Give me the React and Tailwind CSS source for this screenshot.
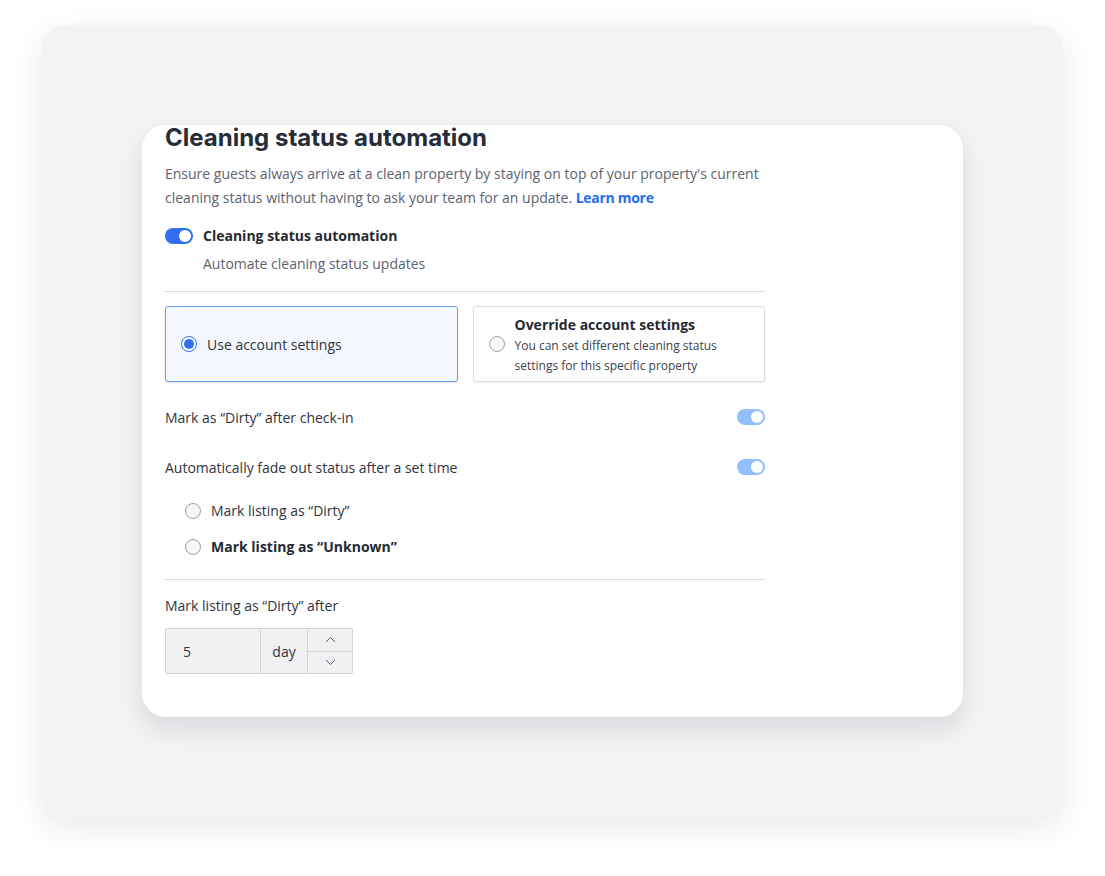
import React from "react";

const body = { fontFamily: '"Open Sans", "Noto Sans", sans-serif' };

function Toggle({ light }) {
  return (
    <div
      className={`relative h-4 w-7 shrink-0 rounded-full ${light ? "bg-[#93c0fb]" : "bg-[#2f6ff0]"}`}
    >
      <div className="absolute right-[2px] top-[2px] h-3 w-3 rounded-full bg-white" />
    </div>
  );
}

function Radio({ checked }) {
  return checked ? (
    <div className="flex h-4 w-4 shrink-0 items-center justify-center rounded-full border border-[#2f6ff0] bg-white">
      <div className="h-[10px] w-[10px] rounded-full bg-[#2f6ff0]" />
    </div>
  ) : (
    <div className="h-4 w-4 shrink-0 rounded-full border border-[#9a9ea8] bg-[#f7f7f9]" />
  );
}

export default function App() {
  return (
    <div className="h-[876px] w-[1105px] bg-white pl-[42px] pt-[25px]" style={body}>
      <div className="h-[792px] w-[1021px] rounded-[24px] bg-[#f3f3f4] pl-[100px] pt-[100px] shadow-[0_10px_30px_rgba(40,40,70,0.10)]">
        <div className="h-[592px] w-[821px] overflow-hidden rounded-[24px] bg-white pl-[23px] shadow-[0_12px_24px_rgba(40,45,80,0.12)]">
          <div className="w-[600px]">
            <h1
              className="mt-[-3px] text-[24px] font-bold leading-[32px] text-[#272d38]"
              style={{ fontFamily: 'Inter, "Noto Sans", sans-serif' }}
            >
              Cleaning status automation
            </h1>
            <p className="mt-[8px] text-[14px] leading-[24px] text-[#5d6270]">
              Ensure guests always arrive at a clean property by staying on top of your property's current cleaning status without having to ask your team for an update.{" "}
              <span className="font-bold tracking-[-0.3px] text-[#1f6ef2]">Learn more</span>
            </p>
            <div className="mt-[16px] flex items-center gap-[10px]">
              <Toggle />
              <span className="text-[14px] font-bold leading-[20px] text-[#252a33]">
                Cleaning status automation
              </span>
            </div>
            <div className="mt-[8px] pl-[38px] text-[14px] leading-[20px] text-[#5d6270]">
              Automate cleaning status updates
            </div>
            <div className="mt-[17px] h-px w-full bg-[#dcdde1]" />
            <div className="mt-[14px] flex gap-[15px]">
              <div className="flex h-[76px] w-[293px] items-center gap-[10px] rounded-[3px] border border-[#6b9cf5] bg-[#f4f7fe] pl-[15px] shadow-[0_1px_2px_rgba(0,0,0,0.12)]">
                <Radio checked />
                <span className="text-[14px] text-[#30343d]">Use account settings</span>
              </div>
              <div className="flex h-[76px] w-[293px] items-center gap-[10px] rounded-[3px] border border-[#dcdde1] bg-white pl-[15px] shadow-[0_1px_2px_rgba(0,0,0,0.06)]">
                <Radio />
                <div className="pt-[2px]">
                  <div className="text-[14px] font-bold leading-[20px] text-[#252a33]">
                    Override account settings
                  </div>
                  <div className="mt-[1px] w-[215px] text-[12px] leading-[20px] text-[#3c414b]">
                    You can set different cleaning status settings for this specific property
                  </div>
                </div>
              </div>
            </div>
            <div className="mt-[25px] flex h-[20px] items-center justify-between">
              <span className="text-[14px] text-[#30343d]">Mark as “Dirty” after check-in</span>
              <Toggle light />
            </div>
            <div className="mt-[30px] flex h-[20px] items-center justify-between">
              <span className="text-[14px] text-[#30343d]">
                Automatically fade out status after a set time
              </span>
              <Toggle light />
            </div>
            <div className="mt-[24px] flex items-center gap-[10px] pl-[20px]">
              <Radio />
              <span className="text-[14px] leading-[20px] text-[#30343d]">Mark listing as “Dirty”</span>
            </div>
            <div className="mt-[16px] flex items-center gap-[10px] pl-[20px]">
              <Radio />
              <span className="text-[14px] font-bold leading-[20px] text-[#252a33]">
                Mark listing as “Unknown”
              </span>
            </div>
            <div className="mt-[22px] h-px w-full bg-[#dcdde1]" />
            <div className="mt-[16px] text-[14px] leading-[20px] text-[#30343d]">
              Mark listing as “Dirty” after
            </div>
            <div className="mt-[12px] flex h-[46px] w-[188px] rounded-[2px] border border-[#d3d4d8] bg-[#f1f1f3]">
              <div className="flex w-[95px] items-center border-r border-[#d3d4d8] pl-[17px] text-[14px] text-[#30343d]">
                5
              </div>
              <div className="flex w-[47px] items-center justify-center border-r border-[#d3d4d8] text-[14px] text-[#30343d]">
                day
              </div>
              <div className="flex flex-1 flex-col">
                <div className="flex flex-1 items-center justify-center border-b border-[#d3d4d8]">
                  <svg width="11" height="7" viewBox="0 0 11 7" fill="none">
                    <path d="M1 6L5.5 1.5L10 6" stroke="#5d6270" strokeWidth="1" />
                  </svg>
                </div>
                <div className="flex flex-1 items-center justify-center">
                  <svg width="11" height="7" viewBox="0 0 11 7" fill="none">
                    <path d="M1 1L5.5 5.5L10 1" stroke="#5d6270" strokeWidth="1" />
                  </svg>
                </div>
              </div>
            </div>
          </div>
        </div>
      </div>
    </div>
  );
}
